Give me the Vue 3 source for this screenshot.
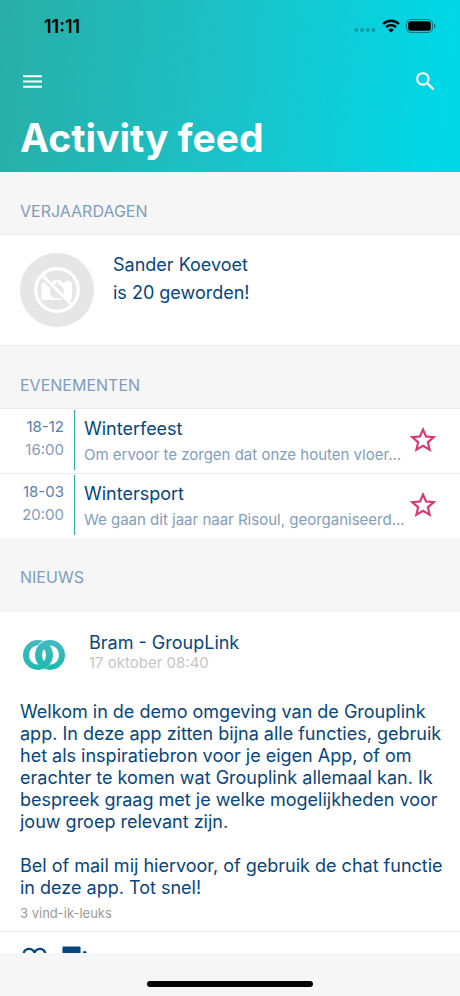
<script setup>
import { ref } from 'vue'

const events = ref([
  {
    date: '18-12',
    time: '16:00',
    title: 'Winterfeest',
    text: 'Om ervoor te zorgen dat onze houten vloer...',
    starred: false
  },
  {
    date: '18-03',
    time: '20:00',
    title: 'Wintersport',
    text: 'We gaan dit jaar naar Risoul, georganiseerd...',
    starred: false
  }
])

const paragraphs = [
  'Welkom in de demo omgeving van de Grouplink app. In deze app zitten bijna alle functies, gebruik het als inspiratiebron voor je eigen App, of om erachter te komen wat Grouplink allemaal kan. Ik bespreek graag met je welke mogelijkheden voor jouw groep relevant zijn.',
  'Bel of mail mij hiervoor, of gebruik de chat functie in deze app. Tot snel!'
]
</script>

<template>
  <div class="app">
    <header class="header">
      <div class="status">
        <span class="clock">11:11</span>
        <div class="status-icons">
          <svg class="dots" viewBox="0 0 22 4" aria-hidden="true">
            <circle cx="2.3" cy="2" r="1.9" />
            <circle cx="8" cy="2" r="1.9" />
            <circle cx="13.7" cy="2" r="1.9" />
            <circle cx="19.4" cy="2" r="1.9" />
          </svg>
          <svg class="wifi" viewBox="0 0 18 14" aria-hidden="true">
            <path d="M1.1 5a11.200 11.200 0 0 1 15.800 0" />
            <path d="M4 8.200a7.100 7.100 0 0 1 10 0" />
            <path class="fill" d="M9 13.400 6.300 10.700a4 4 0 0 1 5.400 0z" />
          </svg>
          <svg class="battery" viewBox="0 0 30 14" aria-hidden="true">
            <rect class="case" x=".5" y=".5" width="26" height="13" rx="4" />
            <rect x="2.2" y="2.2" width="22.6" height="9.6" rx="2.4" />
            <path class="tip" d="M28 4.8a2.4 2.4 0 0 1 0 4.4z" />
          </svg>
        </div>
      </div>
      <div class="toolbar">
        <button class="icon-button" type="button" aria-label="Menu">
          <svg viewBox="0 0 24 24"><path d="M3 18h18v-2H3v2zm0-5h18v-2H3v2zm0-7v2h18V6H3z" /></svg>
        </button>
        <button class="icon-button" type="button" aria-label="Zoeken">
          <svg viewBox="0 0 24 24">
            <path d="M15.5 14h-.79l-.28-.27A6.47 6.47 0 0 0 16 9.5 6.5 6.5 0 1 0 9.5 16c1.61 0 3.09-.59 4.23-1.57l.27.28v.79l5 4.99L20.49 19l-4.99-5zm-6 0C7.01 14 5 11.99 5 9.5S7.01 5 9.5 5 14 7.01 14 9.5 11.99 14 9.5 14z" />
          </svg>
        </button>
      </div>
      <h1>Activity feed</h1>
    </header>

    <main class="feed">
      <h2>VERJAARDAGEN</h2>
      <section class="birthday">
        <svg class="avatar" viewBox="0 0 74 74" aria-hidden="true">
          <circle cx="37" cy="37" r="37" fill="#e6e6e6" />
          <path fill="#fff" d="M22 30h2v-1.500h4V30h3.500l2-2.700h7l2 2.700H45l1-2h4.500l1 2h.5v15a2 2 0 0 1-2 2H23.500a2 2 0 0 1-2-2V30.500z" />
          <circle cx="37" cy="38.500" r="7" fill="#e6e6e6" />
          <circle cx="37" cy="30.500" r="1.600" fill="#e6e6e6" />
          <path d="m21 24 30 30" stroke="#e6e6e6" stroke-width="3" />
          <path d="m22 22 30 30" stroke="#fff" stroke-width="3" />
          <circle cx="37" cy="37" r="21.300" fill="none" stroke="#fff" stroke-width="3.300" />
        </svg>
        <p>Sander Koevoet<br />is 20 geworden!</p>
      </section>

      <h2>EVENEMENTEN</h2>
      <section class="events">
        <article v-for="event in events" :key="event.title" class="event">
          <div class="when">
            <span class="date">{{ event.date }}</span>
            <span>{{ event.time }}</span>
          </div>
          <div class="what">
            <h3>{{ event.title }}</h3>
            <p>{{ event.text }}</p>
          </div>
          <button
            class="star"
            type="button"
            :aria-label="event.title"
            :aria-pressed="event.starred"
            @click="event.starred = !event.starred"
          >
            <svg viewBox="0 0 24 24">
              <path v-if="event.starred" d="M12 17.270 18.180 21l-1.640-7.030L22 9.240l-7.190-.610L12 2 9.190 8.630 2 9.240l5.460 4.730L5.820 21z" />
              <path v-else d="m22 9.240-7.190-.62L12 2 9.190 8.630 2 9.240l5.460 4.730L5.820 21 12 17.270 18.180 21l-1.630-7.030L22 9.240zM12 15.400l-3.760 2.270 1-4.280-3.320-2.880 4.380-.38L12 6.100l1.710 4.040 4.380.38-3.320 2.880 1 4.280L12 15.400z" />
            </svg>
          </button>
        </article>
      </section>

      <h2 class="news-label">NIEUWS</h2>
      <article class="post">
        <div class="author">
          <svg class="logo" viewBox="0 0 42 30" aria-hidden="true">
            <defs>
              <linearGradient id="ring" x1="0" y1="0" x2="0" y2="1">
                <stop offset="0" stop-color="#45b8c2" />
                <stop offset="1" stop-color="#1db9ad" />
              </linearGradient>
            </defs>
            <path fill="url(#ring)" fill-rule="evenodd" d="M15 0a15 15 0 1 0 0 30 15 15 0 1 0 0-30zM14.500 5.500a8.500 9.500 0 1 1 0 19 8.500 9.500 0 1 1 0-19z" />
            <path fill="url(#ring)" fill-rule="evenodd" d="M27 0a15 15 0 1 0 0 30 15 15 0 1 0 0-30zM27.500 5.500a8.500 9.500 0 1 1 0 19 8.500 9.500 0 1 1 0-19z" />
            <path d="M20.500 1.300C17 2.800 14.500 5 13.200 8" fill="none" stroke="#fff" stroke-width=".9" />
            <path d="M21.500 28.700c3-1.300 5.500-4 6.700-7" fill="none" stroke="#fff" stroke-opacity=".35" stroke-width=".8" />
          </svg>
          <div>
            <h3>Bram - GroupLink</h3>
            <time>17 oktober 08:40</time>
          </div>
        </div>
        <div class="body">
          <p v-for="paragraph in paragraphs" :key="paragraph">{{ paragraph }}</p>
        </div>
        <p class="likes">3 vind-ik-leuks</p>
        <div class="actions">
          <button type="button" aria-label="Vind ik leuk">
            <svg viewBox="0 0 24 24">
              <path d="M16.500 3c-1.740 0-3.410.810-4.500 2.090C10.910 3.810 9.240 3 7.500 3 4.420 3 2 5.420 2 8.500c0 3.780 3.400 6.860 8.550 11.540L12 21.350l1.450-1.320C18.600 15.360 22 12.280 22 8.500 22 5.420 19.580 3 16.500 3zm-4.400 15.550-.1.100-.1-.1C7.140 14.240 4 11.390 4 8.500 4 6.500 5.500 5 7.500 5c1.540 0 3.040.990 3.570 2.360h1.870C13.460 5.990 14.960 5 16.500 5c2 0 3.500 1.500 3.500 3.500 0 2.890-3.140 5.740-7.900 10.050z" />
            </svg>
          </button>
          <button type="button" aria-label="Reageren">
            <svg viewBox="0 0 24 24">
              <path d="M21 6h-2v9H6v2c0 .55.45 1 1 1h11l4 4V7c0-.55-.45-1-1-1zm-4 6V3c0-.55-.45-1-1-1H3c-.55 0-1 .45-1 1v14l4-4h10c.55 0 1-.45 1-1z" />
            </svg>
          </button>
        </div>
      </article>
    </main>

    <footer class="home-bar"><span></span></footer>
  </div>
</template>

<style>
body {
  margin: 0;
}
</style>

<style scoped>
.app {
  display: flex;
  flex-direction: column;
  height: 100vh;
  overflow: hidden;
  background: #f6f6f6;
  color: #054680;
  font-family: Inter, "Liberation Sans", sans-serif;
}
h1,
h2,
h3,
p {
  margin: 0;
  font-weight: 400;
}
svg {
  display: block;
}
button {
  padding: 0;
  border: 0;
  background: none;
  color: inherit;
  cursor: pointer;
}
button svg {
  width: 100%;
  height: 100%;
  fill: currentColor;
}

.header {
  flex: none;
  box-sizing: border-box;
  height: 172px;
  padding: 0 20px;
  background: linear-gradient(96deg, #28aea6 0%, #1cc1c6 47%, #00d8e8 96%);
  color: #fff;
}
.status {
  display: flex;
  align-items: center;
  justify-content: space-between;
  height: 52px;
  padding: 0 4px 0 24px;
  color: #000;
}
.clock {
  font-size: 18px;
  font-weight: 600;
}
.status-icons {
  display: flex;
  align-items: center;
  gap: 6px;
}
.dots {
  width: 22px;
  height: 4px;
  margin-top: 8px;
  opacity: 0.25;
}
.wifi {
  width: 18px;
  height: 14px;
  fill: none;
  stroke: #000;
  stroke-width: 2.4;
}
.wifi .fill {
  fill: #000;
  stroke: none;
}
.battery {
  width: 30px;
  height: 14px;
}
.case {
  fill: none;
  stroke: #000;
  stroke-opacity: 0.45;
}
.tip {
  fill-opacity: 0.5;
}
.toolbar {
  display: flex;
  align-items: center;
  justify-content: space-between;
  height: 58px;
  padding-right: 2px;
}
.icon-button {
  width: 25px;
  height: 25px;
}
h1 {
  font-size: 39px;
  font-weight: 700;
  line-height: 56px;
}

.feed {
  flex: 1;
  min-height: 0;
  overflow: hidden;
}
h2 {
  padding: 28px 20px 12px;
  color: #7f9dbf;
  font-size: 16px;
  line-height: 22px;
}
.birthday {
  display: flex;
  align-items: flex-end;
  gap: 19px;
  padding: 16px 20px 18px;
  border-top: 1px solid #ececec;
  border-bottom: 1px solid #ececec;
  background: #fff;
}
.avatar {
  width: 74px;
  height: 74px;
}
.birthday p {
  padding-bottom: 20px;
  font-size: 18px;
  line-height: 28px;
}
.events {
  background: #fff;
}
.event {
  display: flex;
  align-items: center;
  padding: 1px 21px 3px 0;
  border-top: 1px solid #ececec;
}
.when {
  flex: none;
  display: flex;
  flex-direction: column;
  box-sizing: border-box;
  width: 75px;
  height: 60px;
  padding: 5px 10px 0 0;
  border-right: 1px solid #2bb0a8;
  color: #7f9dbf;
  font-size: 15px;
  line-height: 23px;
  text-align: right;
}
.date {
  color: #5580ac;
}
.what {
  flex: 1;
  min-width: 0;
  padding: 4px 0 0 9px;
}
h3 {
  font-size: 18px;
  line-height: 26px;
}
.what p {
  overflow: hidden;
  color: #7f9dbf;
  font-size: 15px;
  line-height: 26px;
  text-overflow: ellipsis;
  white-space: nowrap;
}
.star {
  flex: none;
  width: 32px;
  height: 32px;
  color: #d93871;
}
.news-label {
  padding-bottom: 24px;
}
.post {
  background: #fff;
}
.author {
  display: flex;
  align-items: center;
  gap: 24px;
  padding: 19px 20px 0 23px;
}
.author h3 {
  line-height: 24px;
}
.author time {
  display: block;
  color: #c6c6c6;
  font-size: 15px;
  line-height: 16px;
}
.logo {
  width: 42px;
  height: 30px;
  padding-top: 8px;
}
.body {
  display: grid;
  gap: 22px;
  padding: 30px 12px 5px 20px;
  font-size: 18px;
  line-height: 22px;
}
.likes {
  padding: 0 20px;
  color: #9a9a9a;
  font-size: 13px;
  line-height: 18px;
}
.actions {
  display: flex;
  gap: 11px;
  margin-top: 9px;
  padding: 12px 20px;
  border-top: 1px solid #f0f0f0;
}
.actions button {
  width: 29px;
  height: 29px;
}
.home-bar {
  flex: none;
  display: flex;
  align-items: flex-end;
  justify-content: center;
  height: 34px;
  padding-bottom: 9px;
}
.home-bar span {
  width: 36%;
  height: 6px;
  border-radius: 3px;
  background: #000;
}
</style>
